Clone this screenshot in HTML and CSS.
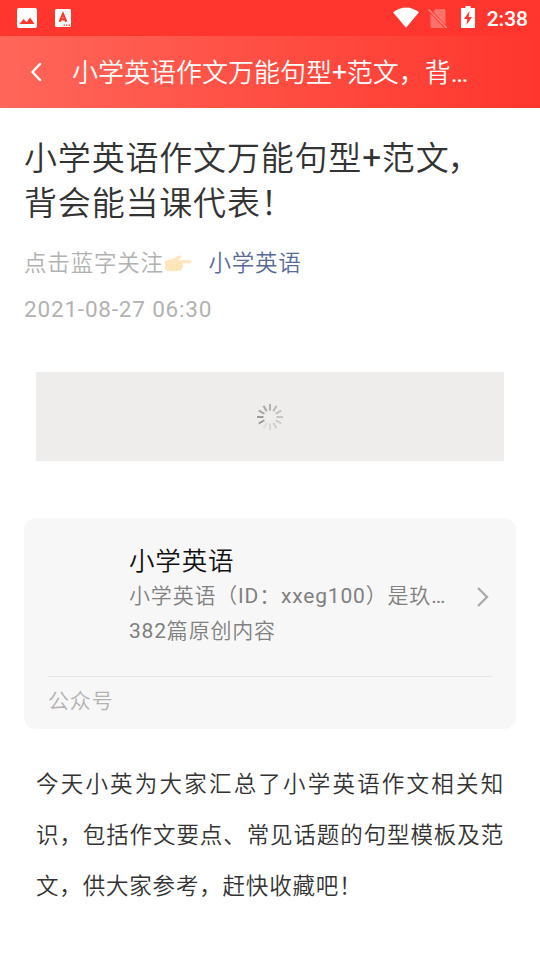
FILE: index.html
```html
<!DOCTYPE html>
<html lang="zh-CN">
<head>
<meta charset="utf-8">
<title>小学英语</title>
<link rel="stylesheet" href="styles.css">
</head>
<body>
<div class="status">
  <svg class="st-image" width="20" height="20" viewBox="0 0 20 20"><rect width="20" height="20" rx="2" fill="#fff"/><path d="M2.500 16 6.500 11l3 3.200L13 9.500l4.500 6.500z" fill="#ff362d"/></svg>
  <svg class="st-letter" width="16" height="18" viewBox="0 0 16 18"><rect width="16" height="18" rx="1.500" fill="#fff"/><path d="M4.700 12.800 8 4.800l3.300 8M5.800 10.300h4.400" fill="none" stroke="#ff362d" stroke-width="2.200"/><path d="M8.500 16.200h1.500m1 0h1.500m1 0H15" stroke="#ff362d" stroke-width="1.300"/></svg>
  <div class="spacer"></div>
  <svg class="st-wifi" width="26" height="21" viewBox="0 0 26 21"><path d="M0 5.200Q13-4.200 26 5.200L13 20.800z" fill="#fff"/></svg>
  <svg class="st-sim" width="20" height="21" viewBox="0 0 20 21"><path d="M7.500 1H16q1.500 0 1.500 1.500V17L5.500 4zM2.500 5.500 16 20H4q-1.500 0-1.500-1.500z" fill="#ff726b"/><path d="m.7 1.500 18 18.500" stroke="#ff8781" stroke-width="1.600"/></svg>
  <svg class="st-battery" width="14" height="22" viewBox="0 0 14 22"><path d="M4.500 0h5v2H14v20H0V2h4.500z" fill="#fff"/><path d="M8.500 5 3 13h3.300l-.8 6L11 11H7.700z" fill="#ff362d"/></svg>
  <span class="clock">2:38</span>
</div>
<header class="nav">
  <svg width="12" height="20" viewBox="0 0 12 20"><path d="M10 2 2.500 10l7.500 8" fill="none" stroke="#fff" stroke-width="2.500" stroke-linecap="round" stroke-linejoin="round"/></svg>
  <div class="nav-title">小学英语作文万能句型<span class="plus">+</span>范文，背<span class="latin">…</span></div>
</header>
<main>
  <h1>小学英语作文万能句型<span class="plus">+</span>范文<span class="comma">，</span><br>背会能当课代表！</h1>
  <div class="meta">
    <span>点击蓝字关注</span>
    <svg width="28" height="18" viewBox="0 0 28 18"><path d="M1 6.500Q1 5 3 5l4-.3L14 1q3-1.500 3.300.6.100 1.300-3.300 3.700h11.500q2 0 2 1.500t-2 1.500H18q1.600 1 .5 2.700.8 1.700-.8 2.500.2 2-2.200 2.200l-7.500.5Q5 16 3 15.500q-2-.2-2-2z" fill="#fee7bc"/><path d="M13 8.500h5m-5.500 3h5.500m-5.500 2.600h4" stroke="#fbdca8" stroke-width=".7"/></svg>
    <a>小学英语</a>
  </div>
  <div class="date">2021-08-27 06:30</div>
  <div class="loading">
    <svg width="28" height="28" viewBox="-14 -14 28 28" stroke-width="2">
      <path d="M0-6.500v-6.500" stroke="#b1b0b0"/>
      <path d="M0-6.500v-6.500" stroke="#b8b7b7" transform="rotate(30)"/>
      <path d="M0-6.500v-6.500" stroke="#bfbebe" transform="rotate(60)"/>
      <path d="M0-6.500v-6.500" stroke="#c6c5c5" transform="rotate(90)"/>
      <path d="M0-6.500v-6.500" stroke="#cccbca" transform="rotate(120)"/>
      <path d="M0-6.500v-6.500" stroke="#d1d0cf" transform="rotate(150)"/>
      <path d="M0-6.500v-6.500" stroke="#d7d6d5" transform="rotate(180)"/>
      <path d="M0-6.500v-6.500" stroke="#dddcdb" transform="rotate(210)"/>
      <path d="M0-6.500v-6.500" stroke="#989797" transform="rotate(240)"/>
      <path d="M0-6.500v-6.500" stroke="#9b9a9a" transform="rotate(270)"/>
      <path d="M0-6.500v-6.500" stroke="#a2a1a1" transform="rotate(300)"/>
      <path d="M0-6.500v-6.500" stroke="#a9a8a8" transform="rotate(330)"/>
    </svg>
  </div>
  <section class="card">
    <div class="profile">
      <div class="info">
        <div class="name">小学英语</div>
        <div class="desc">小学英语（<span class="latin">ID</span>：<span class="latin">xxeg100</span>）是玖<span class="latin">…</span></div>
        <div class="desc"><span class="latin">382</span>篇原创内容</div>
      </div>
      <svg class="chevron" width="14" height="20" viewBox="0 0 14 20"><path d="m2 1 9 9-9 9" fill="none" stroke="#aaa" stroke-width="2.300"/></svg>
    </div>
    <div class="kind">公众号</div>
  </section>
  <p class="body">今天小英为大家汇总了小学英语作文相关知识，包括作文要点、常见话题的句型模板及范文，供大家参考，赶快收藏吧！</p>
</main>
</body>
</html>
```
FILE: styles.css
```css
* { box-sizing: border-box; }
body {
  margin: 0;
  height: 960px;
  overflow: hidden;
  background: #fff;
  color: #333;
  font-family: Roboto, "Noto Sans CJK SC", sans-serif;
  font-weight: 350;
  text-spacing-trim: space-all;
}
svg { display: block; flex: none; }
.latin { font-weight: 400; }
.status {
  display: flex;
  align-items: center;
  height: 36px;
  padding: 0 12px 0 17px;
  background: #ff362d;
}
.st-letter { margin-left: 18px; }
.spacer { flex: 1; }
.st-wifi { margin-right: 9px; margin-bottom: 2px; }
.st-sim { margin-right: 13px; }
.st-battery { margin-right: 12px; margin-bottom: 2px; }
.clock { color: #fff; font-size: 21px; font-weight: 500; line-height: 36px; padding-top: 2px; }
.nav {
  display: flex;
  align-items: center;
  height: 72px;
  padding-left: 30px;
  background: linear-gradient(90deg, #ff6659, #ff362d);
  color: #fff;
}
.nav-title {
  margin-left: 30px;
  padding-top: 2px;
  font-size: 26px;
  line-height: 70px;
  white-space: nowrap;
}
.plus { font-family: "Noto Sans CJK SC", sans-serif; font-weight: 500; line-height: 0; }
main { padding: 28px 24px 0; letter-spacing: .816px; }
h1 { height: 90px; margin: 0; font-size: 33px; font-weight: 350; line-height: 45px; white-space: nowrap; }
.comma { margin-left: -2px; }
.meta {
  display: flex;
  align-items: center;
  height: 46px;
  margin-top: 15px;
  color: #b2b2b2;
  font-size: 22.5px;
  line-height: 45px;
}
.meta span, .meta a { height: 46px; }
.meta a { margin-left: 16.5px; color: #576b95; }
.date { height: 46px; color: #b2b2b2; font-size: 22.5px; font-weight: 400; line-height: 44px; }
.loading {
  display: flex;
  align-items: center;
  justify-content: center;
  height: 89px;
  margin: 39px 12px 0;
  background: #eeedeb;
}
.card {
  height: 211px;
  margin-top: 57px;
  padding: 0 24px;
  border-radius: 12px;
  background: #f7f7f7;
}
.profile {
  display: flex;
  align-items: center;
  height: 159px;
  padding-left: 81px;
  border-bottom: 1px solid #e6e6e6;
}
.info { flex: 1; white-space: nowrap; padding-bottom: 3px; }
.name { height: 36px; color: #111; font-size: 25.5px; line-height: 36px; }
.desc { height: 35px; color: #808080; font-size: 21px; line-height: 35px; }
.chevron { margin-right: 2px; }
.kind { color: #b2b2b2; font-size: 21px; line-height: 49px; }
.body {
  margin: 30px 12px 0;
  font-size: 22.5px;
  line-height: 51px;
  text-align: justify;
}
```
